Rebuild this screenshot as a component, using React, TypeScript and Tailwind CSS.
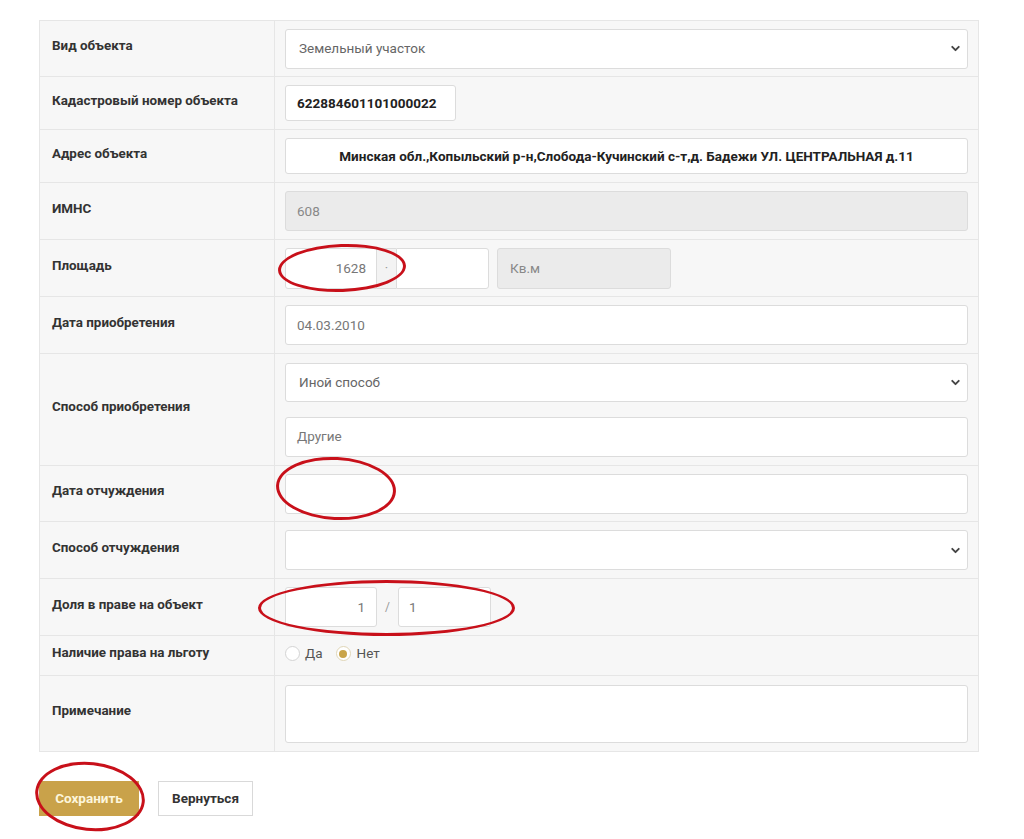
import { ChevronDown } from "lucide-react";

const font = { fontFamily: "Roboto, 'Noto Sans', sans-serif" };

const Row = ({ label, h, children }: { label: string; h: string; children: React.ReactNode }) => (
  <div className={`grid grid-cols-[235px_1fr] border-b border-[#e6e6e6] last:border-b-0 ${h}`}>
    <div className="flex items-center border-r border-[#e6e6e6] px-3 pb-1 text-[13.4px] font-bold text-[#333]">
      {label}
    </div>
    <div className="flex flex-col justify-center gap-[15px] px-[10px]">{children}</div>
  </div>
);

const Select = ({ value, h = "h-[40px]" }: { value?: string; h?: string }) => (
  <div className={`flex items-center justify-between rounded-[3px] border border-[#dcdcdc] bg-white pl-[13px] pr-[5px] text-[13.5px] text-[#666] ${h}`}>
    <span>{value}</span>
    <ChevronDown className="h-[13px] w-[13px] text-[#444]" strokeWidth={3.5} />
  </div>
);

const Field = ({
  value,
  h = "h-[40px]",
  bg = "bg-white",
  color = "text-[#777]",
  cls = "",
}: {
  value?: string;
  h?: string;
  bg?: string;
  color?: string;
  cls?: string;
}) => (
  <div className={`flex items-center rounded-[3px] border border-[#dcdcdc] px-[11px] text-[13.5px] ${bg} ${color} ${h} ${cls}`}>
    {value}
  </div>
);

const Ellipse = ({ cls }: { cls: string }) => (
  <div className={`pointer-events-none absolute rounded-[50%] border-[3px] border-[#c8101a] ${cls}`} />
);

const App = () => {
  return (
    <div className="relative min-h-[839px] bg-white pt-[20px] pl-[39px]" style={font}>
      <div className="w-[940px] border border-[#e6e6e6] bg-[#f7f7f7]">
        <Row label="Вид объекта" h="h-[56px]">
          <Select value="Земельный участок" />
        </Row>
        <Row label="Кадастровый номер объекта" h="h-[53px]">
          <Field value="622884601101000022" h="h-[36px]" color="text-[#222]" cls="w-[171px] font-bold" />
        </Row>
        <Row label="Адрес объекта" h="h-[53px]">
          <Field
            value="Минская обл.,Копыльский р-н,Слобода-Кучинский с-т,д. Бадежи УЛ. ЦЕНТРАЛЬНАЯ д.11"
            h="h-[36px]"
            color="text-[#222]"
            cls="justify-center font-bold"
          />
        </Row>
        <Row label="ИМНС" h="h-[57px]">
          <Field value="608" bg="bg-[#ebebeb]" color="text-[#888]" />
        </Row>
        <Row label="Площадь" h="h-[57px]">
          <div className="flex items-center">
            <div className="flex h-[41px] w-[92px] items-center justify-end rounded-l-[3px] border border-[#dcdcdc] bg-white px-[10px] text-[13.5px] text-[#777]">
              1628
            </div>
            <div className="flex h-[41px] w-[19px] items-center justify-center border-y border-[#dcdcdc] bg-[#f3f3f3] text-[13px] text-[#999]">
              ·
            </div>
            <div className="h-[41px] w-[93px] rounded-r-[3px] border border-[#dcdcdc] bg-white" />
            <div className="ml-[8px] flex h-[41px] w-[174px] items-center rounded-[3px] border border-[#dcdcdc] bg-[#ebebeb] px-[12px] text-[13.5px] text-[#888]">
              Кв.м
            </div>
          </div>
        </Row>
        <Row label="Дата приобретения" h="h-[57px]">
          <Field value="04.03.2010" />
        </Row>
        <Row label="Способ приобретения" h="h-[112px]">
          <Select value="Иной способ" h="h-[39px]" />
          <Field value="Другие" />
        </Row>
        <Row label="Дата отчуждения" h="h-[56px]">
          <Field />
        </Row>
        <Row label="Способ отчуждения" h="h-[57px]">
          <Select />
        </Row>
        <Row label="Доля в праве на объект" h="h-[57px]">
          <div className="flex items-center">
            <div className="flex h-[40px] w-[92px] items-center justify-end rounded-[3px] border border-[#dcdcdc] bg-white px-[11px] text-[13.5px] text-[#777]">
              1
            </div>
            <span className="w-[21px] text-center text-[12px] text-[#999]">/</span>
            <div className="flex h-[40px] w-[93px] items-center rounded-[3px] border border-[#dcdcdc] bg-white px-[10px] text-[13.5px] text-[#777]">
              1
            </div>
          </div>
        </Row>
        <Row label="Наличие права на льготу" h="h-[40px]">
          <div className="flex items-center pb-[4px] text-[13.5px] text-[#555]">
            <span className="h-[15px] w-[15px] rounded-full border border-[#d4d4d4] bg-white" />
            <span className="ml-[5px]">Да</span>
            <span className="ml-[13px] flex h-[15px] w-[15px] items-center justify-center rounded-full border border-[#e0d6b8] bg-white">
              <span className="h-[8px] w-[8px] rounded-full bg-[#c9a449]" />
            </span>
            <span className="ml-[6px]">Нет</span>
          </div>
        </Row>
        <Row label="Примечание" h="h-[75px]">
          <div className="h-[58px] rounded-[3px] border border-[#dcdcdc] bg-white" />
        </Row>
      </div>

      <div className="mt-[29px] flex items-center gap-[19px]">
        <button className="h-[35px] w-[100px] bg-[#c9a24a] text-[13.5px] font-bold text-[#fdf6dc]">Сохранить</button>
        <button className="h-[35px] w-[95px] border border-[#d9d9d9] bg-white text-[13.5px] font-bold text-[#333]">
          Вернуться
        </button>
      </div>

      <Ellipse cls="left-[278px] top-[244px] h-[48px] w-[128px] -rotate-2" />
      <Ellipse cls="left-[276px] top-[457px] h-[63px] w-[120px] rotate-3" />
      <Ellipse cls="left-[258px] top-[580px] h-[56px] w-[257px]" />
      <Ellipse cls="left-[35px] top-[762px] h-[69px] w-[110px] rotate-6" />
    </div>
  );
};

export default App;
